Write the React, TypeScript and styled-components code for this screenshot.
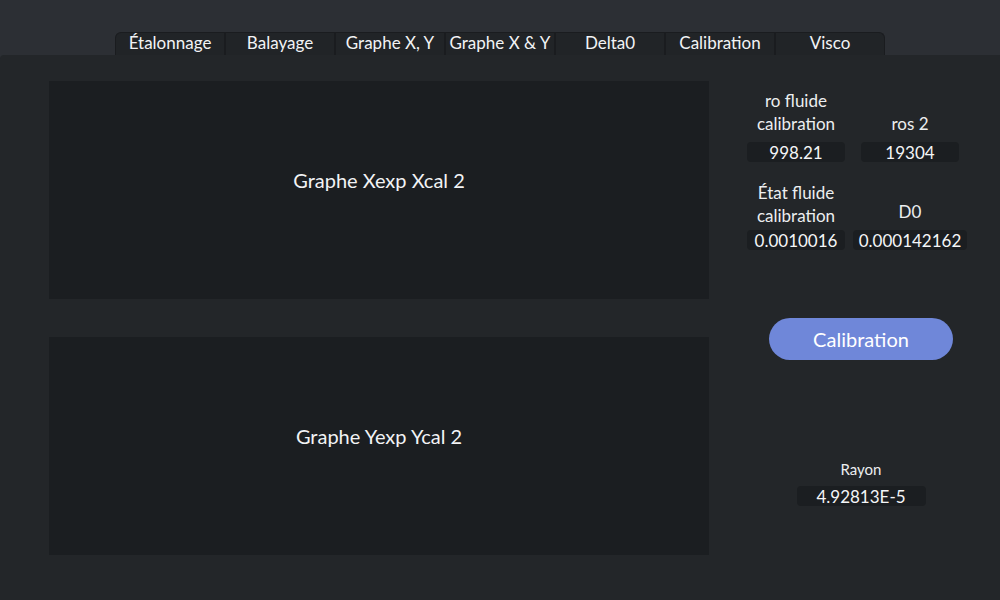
import React from "react";
import styled, { createGlobalStyle } from "styled-components";

const Global = createGlobalStyle`
  html, body { margin: 0; padding: 0; background: #2c2f34; }
  body { font-family: Lato, "Open Sans", sans-serif; color: #eef0f2; }
  * { box-sizing: border-box; }
`;

const Page = styled.div`
  width: 1000px;
  height: 600px;
  display: flex;
  flex-direction: column;
  overflow: hidden;
`;

const TabBar = styled.div`
  display: flex;
  justify-content: center;
  padding-top: 32px;
  height: 55px;
`;

const Tab = styled.div<{ $first?: boolean; $last?: boolean }>`
  width: 110px;
  height: 23px;
  padding-bottom: 3px;
  background: #212427;
  border: 1px solid #1a1c1f;
  border-bottom: none;
  border-top-left-radius: ${(p) => (p.$first ? "6px" : "0")};
  border-top-right-radius: ${(p) => (p.$last ? "6px" : "0")};
  display: flex;
  align-items: center;
  justify-content: center;
  font-size: 17px;
  color: #f2f3f5;
  white-space: nowrap;
`;

const Main = styled.div`
  flex: 1;
  background: #232629;
  border-top-left-radius: 4px;
  display: flex;
`;

const GraphColumn = styled.div`
  display: flex;
  flex-direction: column;
  gap: 38px;
  padding: 26px 0 0 49px;
`;

const Graph = styled.div`
  width: 660px;
  height: 218px;
  padding-bottom: 20px;
  background: #1b1e21;
  display: flex;
  align-items: center;
  justify-content: center;
  font-size: 20px;
  color: #f2f3f5;
`;

const Side = styled.div`
  display: flex;
  flex-direction: column;
  padding-top: 34px;
`;

const FieldGrid = styled.div`
  display: grid;
  grid-template-columns: 114px 114px;
  row-gap: 19px;
  margin-left: 30px;
`;

const Field = styled.div`
  display: flex;
  flex-direction: column;
  align-items: center;
`;

const Label = styled.div<{ $lift?: number }>`
  height: 46px;
  display: flex;
  align-items: flex-end;
  justify-content: center;
  text-align: center;
  font-size: 17px;
  line-height: 23px;
  color: #eceef0;
  padding-bottom: ${(p) => p.$lift ?? 0}px;
`;

const Value = styled.div<{ $gap?: number }>`
  min-width: 98px;
  height: 20px;
  margin-top: ${(p) => p.$gap ?? 7}px;
  padding: 0 6px;
  background: #1b1e21;
  border-radius: 4px;
  display: flex;
  align-items: center;
  justify-content: center;
  font-size: 17px;
  color: #f4f5f7;
  white-space: nowrap;
`;

const Button = styled.button`
  margin: 68px 0 0 60px;
  width: 184px;
  height: 42px;
  border: none;
  border-radius: 21px;
  background: #6f87d9;
  color: #ffffff;
  font-family: Lato, "Open Sans", sans-serif;
  font-size: 20px;
  display: flex;
  align-items: center;
  justify-content: center;
`;

const RayonBlock = styled.div`
  margin: 99px 0 0 60px;
  width: 184px;
  display: flex;
  flex-direction: column;
  align-items: center;
`;

const SmallLabel = styled.div`
  font-size: 15px;
  line-height: 20px;
  color: #eceef0;
`;

const RayonValue = styled.div`
  margin-top: 7px;
  width: 129px;
  height: 20px;
  background: #1b1e21;
  border-radius: 4px;
  display: flex;
  align-items: center;
  justify-content: center;
  font-size: 17px;
  color: #f4f5f7;
`;

const tabs = ["Étalonnage", "Balayage", "Graphe X, Y", "Graphe X & Y", "Delta0", "Calibration", "Visco"];

export default function App() {
  return (
    <Page>
      <Global />
      <TabBar>
        {tabs.map((t, i) => (
          <Tab key={t} $first={i === 0} $last={i === tabs.length - 1}>
            {t}
          </Tab>
        ))}
      </TabBar>
      <Main>
        <GraphColumn>
          <Graph>Graphe Xexp Xcal 2</Graph>
          <Graph>Graphe Yexp Ycal 2</Graph>
        </GraphColumn>
        <Side>
          <FieldGrid>
            <Field>
              <Label>ro fluide<br />calibration</Label>
              <Value>998.21</Value>
            </Field>
            <Field>
              <Label>ros 2</Label>
              <Value>19304</Value>
            </Field>
            <Field>
              <Label>État fluide<br />calibration</Label>
              <Value $gap={3}>0.0010016</Value>
            </Field>
            <Field>
              <Label $lift={4}>D0</Label>
              <Value $gap={3}>0.000142162</Value>
            </Field>
          </FieldGrid>
          <Button>Calibration</Button>
          <RayonBlock>
            <SmallLabel>Rayon</SmallLabel>
            <RayonValue>4.92813E-5</RayonValue>
          </RayonBlock>
        </Side>
      </Main>
    </Page>
  );
}
